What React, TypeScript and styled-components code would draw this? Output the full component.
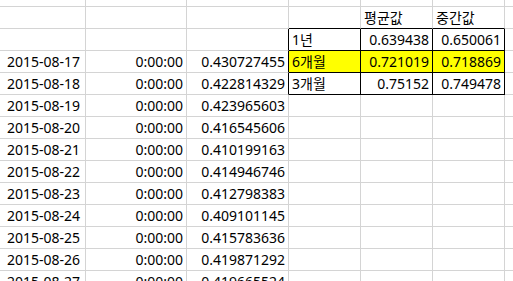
import React from 'react';
import styled, { createGlobalStyle } from 'styled-components';

const GlobalStyle = createGlobalStyle`
  html, body {
    margin: 0;
    padding: 0;
    background: #fff;
    overflow: hidden;
  }
`;

const widths = [86, 101, 102, 72, 72, 72, 60];

type CellData = {
  text?: string;
  right?: boolean;
  yellow?: boolean;
  boxRight?: boolean;
  boxBottom?: boolean;
};

const dates = [
  ['2015-08-19', '0.423965603'],
  ['2015-08-20', '0.416545606'],
  ['2015-08-21', '0.410199163'],
  ['2015-08-22', '0.414946746'],
  ['2015-08-23', '0.412798383'],
  ['2015-08-24', '0.409101145'],
  ['2015-08-25', '0.415783636'],
  ['2015-08-26', '0.419871292'],
  ['2015-08-27', '0.419665524'],
];

const rows: CellData[][] = [
  [{}, {}, {}, {}, {}, {}, {}],
  [
    {}, {}, {},
    { boxBottom: true },
    { text: '평균값', boxBottom: true },
    { text: '중간값', boxBottom: true },
    {},
  ],
  [
    {}, {}, { boxRight: true },
    { text: '1년', boxRight: true, boxBottom: true },
    { text: '0.639438', right: true, boxRight: true, boxBottom: true },
    { text: '0.650061', right: true, boxRight: true, boxBottom: true },
    {},
  ],
  [
    { text: '2015-08-17' },
    { text: '0:00:00', right: true },
    { text: '0.430727455', right: true, boxRight: true },
    { text: '6개월', yellow: true, boxRight: true, boxBottom: true },
    { text: '0.721019', right: true, yellow: true, boxRight: true, boxBottom: true },
    { text: '0.718869', right: true, yellow: true, boxRight: true, boxBottom: true },
    {},
  ],
  [
    { text: '2015-08-18' },
    { text: '0:00:00', right: true },
    { text: '0.422814329', right: true, boxRight: true },
    { text: '3개월', boxRight: true, boxBottom: true },
    { text: '0.75152', right: true, boxRight: true, boxBottom: true },
    { text: '0.749478', right: true, boxRight: true, boxBottom: true },
    {},
  ],
];

dates.forEach(([d, v]) => {
  rows.push([
    { text: d },
    { text: '0:00:00', right: true },
    { text: v, right: true },
    {}, {}, {}, {},
  ]);
});

const App = () => {
  return (
    <Sheet>
      <GlobalStyle />
      {rows.map((row, r) => (
        <Row key={r} $first={r === 0}>
          {row.map((c, i) => (
            <Cell
              key={i}
              $w={widths[i]}
              $right={c.right}
              $yellow={c.yellow}
              $boxRight={c.boxRight}
              $boxBottom={c.boxBottom}
            >
              {c.text}
            </Cell>
          ))}
        </Row>
      ))}
    </Sheet>
  );
};

export default App;

const Sheet = styled.div`
  width: 513px;
  height: 281px;
  overflow: hidden;
  background: #fff;
  font-family: 'Noto Sans', 'Noto Sans CJK KR', sans-serif;
  font-size: 14px;
  color: #000;
`;

const Row = styled.div<{ $first?: boolean }>`
  display: flex;
  height: ${(p) => (p.$first ? '7px' : '22px')};
`;

const Cell = styled.div<{
  $w: number;
  $right?: boolean;
  $yellow?: boolean;
  $boxRight?: boolean;
  $boxBottom?: boolean;
}>`
  flex: 0 0 ${(p) => p.$w}px;
  box-sizing: border-box;
  height: 100%;
  border-right: 1px solid ${(p) => (p.$boxRight ? '#000' : '#d4d4d4')};
  border-bottom: 1px solid ${(p) => (p.$boxBottom ? '#000' : '#d4d4d4')};
  background: ${(p) => (p.$yellow ? '#ffff00' : '#fff')};
  text-align: ${(p) => (p.$right ? 'right' : 'left')};
  padding: 0 3px;
  line-height: 21px;
  white-space: nowrap;

  &:first-child {
    padding-left: 7px;
  }
`;
